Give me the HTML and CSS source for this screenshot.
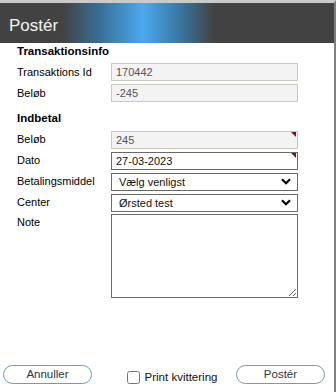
FILE: index.html
```html
<!DOCTYPE html>
<html lang="da">
<head>
    <meta charset="UTF-8">
    <title>Postér</title>
    <link rel="stylesheet" href="styles.css">
</head>
<body>
    <!-- dialog window -->
    <div class="dialog">
        <div class="titlebar">
            <h1 class="title">Postér</h1>
        </div>

        <div class="content">
            <!-- transaction info section -->
            <div class="section">
                <h2 class="section-title">Transaktionsinfo</h2>
                <div class="row">
                    <label class="label">Transaktions Id</label>
                    <input class="input" type="text" value="170442" disabled>
                </div>
                <div class="row">
                    <label class="label">Beløb</label>
                    <input class="input" type="text" value="-245" disabled>
                </div>
            </div>

            <!-- payment section -->
            <div class="section">
                <h2 class="section-title">Indbetal</h2>
                <div class="row">
                    <label class="label">Beløb</label>
                    <div class="field required">
                        <input class="input" type="text" value="245" disabled>
                    </div>
                </div>
                <div class="row">
                    <label class="label">Dato</label>
                    <div class="field required">
                        <input class="input" type="text" value="27-03-2023">
                    </div>
                </div>
                <div class="row">
                    <label class="label">Betalingsmiddel</label>
                    <div class="field">
                        <select class="input select">
                            <option>Vælg venligst</option>
                        </select>
                        <svg class="chevron" width="10" height="7" viewBox="0 0 10 7">
                            <path d="M1 1.2 L5 5.2 L9 1.2" fill="none" stroke="#000" stroke-width="2.2"/>
                        </svg>
                    </div>
                </div>
                <div class="row">
                    <label class="label">Center</label>
                    <div class="field">
                        <select class="input select">
                            <option>Ørsted test</option>
                        </select>
                        <svg class="chevron" width="10" height="7" viewBox="0 0 10 7">
                            <path d="M1 1.2 L5 5.2 L9 1.2" fill="none" stroke="#000" stroke-width="2.2"/>
                        </svg>
                    </div>
                </div>
                <div class="row row-top">
                    <label class="label">Note</label>
                    <textarea class="input note"></textarea>
                </div>
            </div>
        </div>

        <!-- footer buttons -->
        <div class="footer">
            <button class="btn">Annuller</button>
            <label class="print">
                <input class="check" type="checkbox">
                <span>Print kvittering</span>
            </label>
            <button class="btn">Postér</button>
        </div>
    </div>
</body>
</html>
```

FILE: styles.css
```css
body {
    margin: 0;
    background-color: #fff;
    font-family: "Liberation Sans", Arial, sans-serif;
    color: #111;
}

.dialog {
    width: 336px;
    height: 392px;
    box-sizing: border-box;
    border-top: 3px solid #cacaca;
    border-right: 2px solid #7e7e7e;
    display: flex;
    flex-direction: column;
}

.titlebar {
    height: 40px;
    flex-shrink: 0;
    background-color: #424242;
    background-image: linear-gradient(90deg, #424242 62px, #3a6f96 100px, #4aa9ef 143px, #3a6f96 185px, #424242 214px);
    display: flex;
    align-items: center;
}

.title {
    margin: 0 0 0 9px;
    font-size: 17px;
    font-weight: normal;
    color: #f4f4f4;
    padding-top: 6px;
}

.content {
    padding: 2px 0 0 17px;
}

.section {
    margin-bottom: 10px;
}

.section-title {
    margin: 0 0 5px 0;
    font-size: 11.5px;
    line-height: 13px;
    font-weight: bold;
    color: #000;
}

.row {
    display: flex;
    align-items: center;
    margin-bottom: 3px;
}

.row-top {
    align-items: flex-start;
}

.label {
    width: 94px;
    font-size: 11px;
    color: #000;
}

.row-top .label {
    padding-top: 2px;
}

.field {
    position: relative;
    width: 187px;
    height: 18px;
}

.input {
    width: 187px;
    height: 18px;
    box-sizing: border-box;
    margin: 0;
    border: 1px solid #6a6a6a;
    border-radius: 0;
    padding: 0 4px;
    background-color: #fff;
    font-family: "Liberation Sans", Arial, sans-serif;
    font-size: 11px;
    color: #111;
    outline: 0;
}

.input:disabled {
    background-color: #f3f3f3;
    border-color: #c9c9bd;
    color: #555;
}

.select {
    appearance: none;
    -webkit-appearance: none;
    padding-left: 7px;
}

.chevron {
    position: absolute;
    right: 7px;
    top: 6px;
}

/* little red corner mark on required fields */
.required::after {
    content: "";
    position: absolute;
    top: 2px;
    right: 2px;
    border-top: 5px solid #7a1414;
    border-left: 5px solid transparent;
}

.note {
    height: 84px;
    resize: both;
    padding: 2px 4px;
}

.footer {
    margin-top: auto;
    padding: 0 9px 8px 3px;
    display: flex;
    justify-content: space-between;
    align-items: center;
}

.btn {
    width: 89px;
    height: 19px;
    box-sizing: border-box;
    border: 1px solid #6b9ac2;
    border-radius: 10px;
    background-color: #fff;
    font-family: "Liberation Sans", Arial, sans-serif;
    font-size: 11.5px;
    color: #2e3440;
    padding: 0 0 1px 0;
    cursor: pointer;
}

.print {
    display: flex;
    align-items: center;
    font-size: 11.5px;
    color: #111;
    padding-top: 5px;
    margin-left: 16px;
}

.check {
    width: 13px;
    height: 13px;
    margin: 0 5px 0 0;
}
```
